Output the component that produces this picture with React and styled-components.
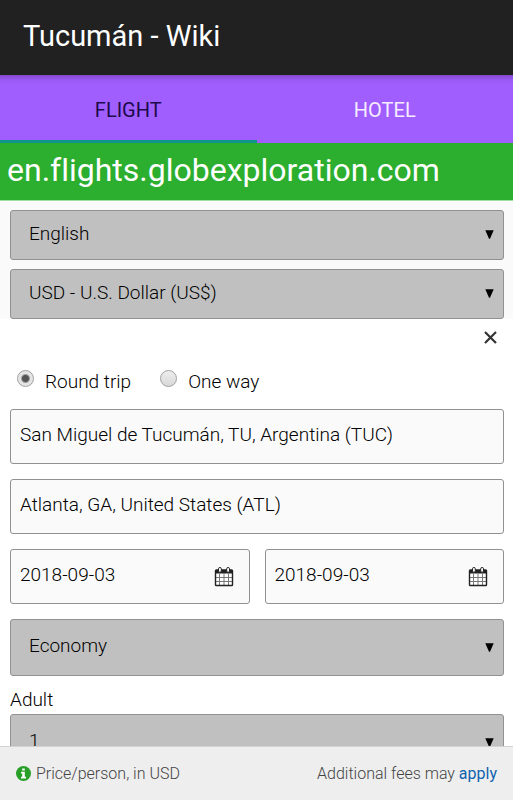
import React, { useState } from "react";
import styled, { createGlobalStyle } from "styled-components";

const App = () => {
  const [tab, setTab] = useState("flight");
  const [trip, setTrip] = useState("round");

  return (
    <Screen>
      <GlobalStyle />
      <Header>
        <Title>Tucumán - Wiki</Title>
      </Header>
      <Tabs>
        <Tab $active={tab === "flight"} onClick={() => setTab("flight")}>
          FLIGHT
        </Tab>
        <Tab $active={tab === "hotel"} onClick={() => setTab("hotel")}>
          HOTEL
        </Tab>
      </Tabs>
      <Banner>en.flights.globexploration.com</Banner>

      <Content>
        <Settings>
          <Dropdown label="Language" options={["English"]} />
          <Dropdown label="Currency" options={["USD - U.S. Dollar (US$)"]} />
        </Settings>

        <SearchForm onSubmit={(e) => e.preventDefault()}>
          <CloseRow>
            <CloseButton type="button" aria-label="Close">
              <CloseIcon />
            </CloseButton>
          </CloseRow>

          <TripRow>
            <TripLabel>
              <Radio
                type="radio"
                name="trip"
                checked={trip === "round"}
                onChange={() => setTrip("round")}
              />
              <span>Round trip</span>
            </TripLabel>
            <TripLabel>
              <Radio
                type="radio"
                name="trip"
                checked={trip === "oneway"}
                onChange={() => setTrip("oneway")}
              />
              <span>One way</span>
            </TripLabel>
          </TripRow>

          <Fields>
            <Input
              aria-label="From"
              defaultValue="San Miguel de Tucumán, TU, Argentina (TUC)"
            />
            <Input
              aria-label="To"
              defaultValue="Atlanta, GA, United States (ATL)"
            />
            <DateRow>
              <DateField label="Departure" value="2018-09-03" />
              <DateField label="Return" value="2018-09-03" />
            </DateRow>
            <Dropdown label="Class" options={["Economy"]} tall />
          </Fields>

          <FieldLabel htmlFor="adult">Adult</FieldLabel>
          <Dropdown id="adult" options={["1", "2", "3", "4"]} tall />
        </SearchForm>
      </Content>

      <Footer>
        <FooterNote>
          <InfoIcon />
          Price/person, in USD
        </FooterNote>
        <span>
          Additional fees may <FooterLink href="#fees">apply</FooterLink>
        </span>
      </Footer>
    </Screen>
  );
};

const Dropdown = ({ id, label, options, tall }) => (
  <SelectBox>
    <Select id={id} aria-label={label} $tall={tall}>
      {options.map((option) => (
        <option key={option}>{option}</option>
      ))}
    </Select>
    <Arrow viewBox="0 0 9 9" aria-hidden="true">
      <path d="M0.3 0.3h8.4L5 8.7H4z" />
    </Arrow>
  </SelectBox>
);

const DateField = ({ label, value }) => (
  <DateBox>
    <DateInput aria-label={label} defaultValue={value} />
    <CalendarIcon />
  </DateBox>
);

const CalendarIcon = () => (
  <CalendarSvg viewBox="0 0 20 20" aria-hidden="true">
    <rect x="1.5" y="3" width="17" height="15.5" rx="0.8" fill="#fff" />
    <path d="M1 3h18v3.5H1z" fill="#222" />
    <path
      d="M5.5 6.5V18M10 6.5V18M14.5 6.5V18M1.5 10.5h17M1.5 14.5h17"
      stroke="#777"
      strokeWidth="1"
    />
    <rect
      x="1.5"
      y="3"
      width="17"
      height="15.5"
      rx="0.8"
      fill="none"
      stroke="#222"
      strokeWidth="1.4"
    />
    <rect x="4.5" y="0.5" width="2.8" height="4.8" rx="1.3" fill="#fff" stroke="#222" />
    <rect x="12.7" y="0.5" width="2.8" height="4.8" rx="1.3" fill="#fff" stroke="#222" />
  </CalendarSvg>
);

const CloseIcon = () => (
  <svg width="13" height="13" viewBox="0 0 13 13" aria-hidden="true">
    <path d="M1 1l11 11M12 1L1 12" stroke="#333" strokeWidth="2.2" />
  </svg>
);

const InfoIcon = () => (
  <svg width="15" height="15" viewBox="0 0 15 15" aria-hidden="true">
    <circle cx="7.5" cy="7.5" r="7.5" fill="#28a028" />
    <path d="M6.2 2.4h2.6v2.2H6.2zM5 5.8h3.8v4.9H10v1.8H5v-1.8h1.2V7.6H5z" fill="#fff" />
  </svg>
);

const GlobalStyle = createGlobalStyle`
  * {
    box-sizing: border-box;
  }
  body {
    margin: 0;
    background: #fff;
    color: #000;
    font-family: Roboto, "Liberation Sans", sans-serif;
    font-size: 19px;
    font-weight: 300;
    font-variant-ligatures: none;
  }
  button, input, select {
    margin: 0;
    font: inherit;
    color: inherit;
  }
`;

const Screen = styled.div`
  display: flex;
  flex-direction: column;
  height: 100vh;
`;

const Header = styled.header`
  flex: none;
  padding: 16px 23px 19px;
  background: #212121;
  color: #fff;
`;

const Title = styled.h1`
  margin: 0;
  font-size: 29px;
  line-height: 40px;
  font-weight: 400;
`;

const Tabs = styled.nav`
  flex: none;
  display: flex;
  background: #a05eff;
  background-image: linear-gradient(#8448cc, #9a59f4 5px, #a05eff 10px);
`;

const Tab = styled.button`
  flex: 1;
  height: 68px;
  padding: 5px 0 0;
  border: 0;
  border-bottom: 3px solid ${(props) => (props.$active ? "#0f968c" : "transparent")};
  background: none;
  color: ${(props) => (props.$active ? "#1c0a4a" : "#f6ecff")};
  font-size: 20px;
  font-weight: 400;
`;

const Banner = styled.div`
  flex: none;
  padding: 7px 7px 9px;
  background: #2cae2f;
  border-bottom: 1px solid #a0e0a2;
  color: #fff;
  font-size: 32px;
  font-weight: 400;
  line-height: 41px;
`;

const Content = styled.main`
  flex: 1;
  min-height: 0;
  overflow-y: auto;
  scrollbar-width: none;
`;

const Settings = styled.section`
  display: flex;
  flex-direction: column;
  gap: 9px;
  padding: 9px 9px 0 10px;
  background: #fafafa;
`;

const SearchForm = styled.form`
  padding: 0 9px 16px 10px;
`;

const SelectBox = styled.div`
  position: relative;
`;

const Select = styled.select`
  display: block;
  appearance: none;
  width: 100%;
  height: ${(props) => (props.$tall ? "57px" : "50px")};
  padding: 0 32px ${(props) => (props.$tall ? "5px" : "4px")} 18px;
  border: 1px solid #919191;
  border-radius: 3px;
  background: #c0c0c0;
`;

const Arrow = styled.svg`
  position: absolute;
  top: 50%;
  right: 10px;
  width: 9px;
  height: 9px;
  margin-top: -5px;
  pointer-events: none;
`;

const CloseRow = styled.div`
  display: flex;
  justify-content: flex-end;
`;

const CloseButton = styled.button`
  display: flex;
  padding: 12px 7px 11px;
  border: 0;
  background: none;
`;

const TripRow = styled.div`
  display: flex;
  gap: 29px;
  padding: 15px 7px;
`;

const TripLabel = styled.label`
  display: flex;
  gap: 11px;
  line-height: 24px;
`;

const Radio = styled.input`
  appearance: none;
  width: 17px;
  height: 17px;
  border: 1px solid #a0a0a0;
  border-radius: 50%;
  background: ${(props) =>
    props.checked
      ? "radial-gradient(circle, #555 3px, #e4e4e4 5px)"
      : "linear-gradient(#eee, #d8d8d8)"};
`;

const Fields = styled.div`
  display: flex;
  flex-direction: column;
  gap: 15px;
`;

const Input = styled.input`
  width: 100%;
  height: 55px;
  padding: 0 9px 4px;
  border: 1px solid #919191;
  border-radius: 3px;
  background: #fafafa;
`;

const DateRow = styled.div`
  display: flex;
  gap: 15px;
`;

const DateBox = styled.div`
  flex: 1;
  min-width: 0;
  display: flex;
  align-items: center;
  height: 55px;
  padding-right: 15px;
  border: 1px solid #919191;
  border-radius: 3px;
  background: #fafafa;
`;

const DateInput = styled.input`
  flex: 1;
  min-width: 0;
  height: 100%;
  padding: 0 9px 4px;
  border: 0;
  background: none;
`;

const CalendarSvg = styled.svg`
  flex: none;
  width: 20px;
  height: 20px;
`;

const FieldLabel = styled.label`
  display: block;
  padding: 12px 0 2px;
  line-height: 24px;
`;

const Footer = styled.footer`
  flex: none;
  display: flex;
  align-items: center;
  justify-content: space-between;
  height: 54px;
  padding: 0 16px;
  border-top: 1px solid #d2d2d2;
  background: #eee;
  color: #444;
  font-size: 16px;
`;

const FooterNote = styled.span`
  display: flex;
  align-items: center;
  gap: 5px;
`;

const FooterLink = styled.a`
  color: #0d62ae;
  font-weight: 400;
  text-decoration: none;
`;

export default App;
